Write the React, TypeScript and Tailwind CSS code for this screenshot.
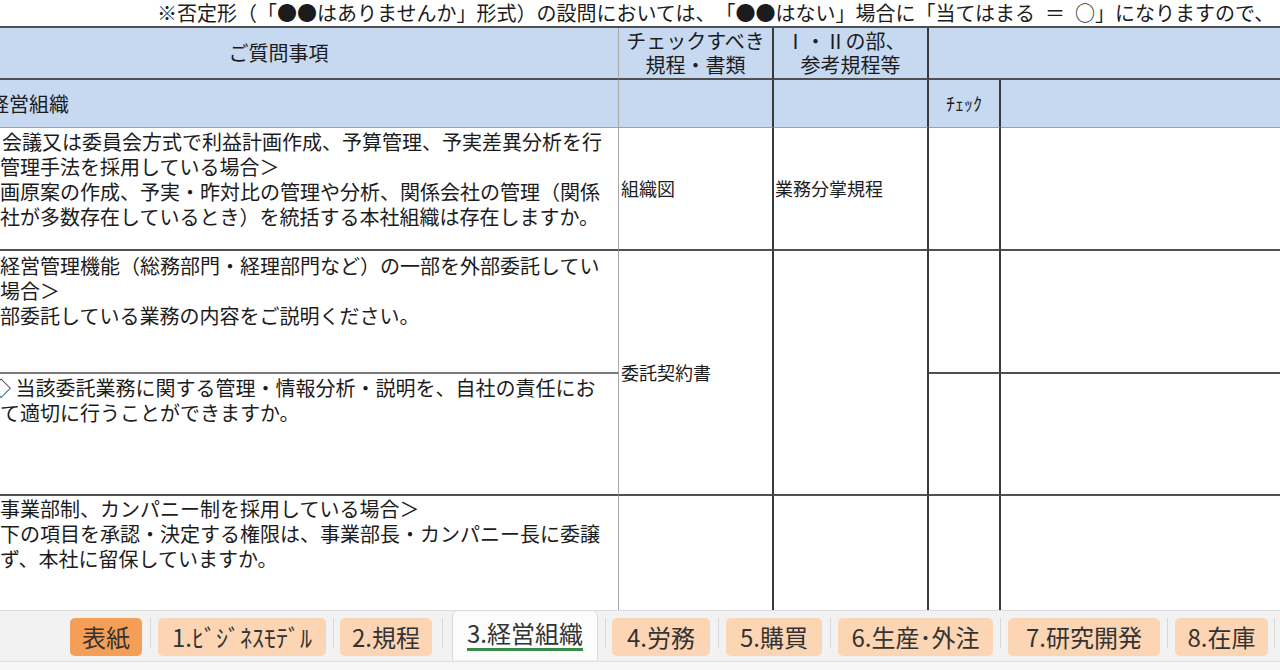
const FONT = "font-['Noto_Sans_CJK_JP','Noto_Sans_CJK_SC',sans-serif]";

const TABS = [
  { label: "表紙", w: "w-[72px]", kind: "dark" },
  { label: "1.ﾋﾞｼﾞﾈｽﾓﾃﾞﾙ", w: "w-[168px]", kind: "light" },
  { label: "2.規程", w: "w-[92px]", kind: "light" },
  { label: "3.経営組織", w: "w-[146px]", kind: "active" },
  { label: "4.労務", w: "w-[98px]", kind: "light" },
  { label: "5.購買", w: "w-[96px]", kind: "light" },
  { label: "6.生産･外注", w: "w-[155px]", kind: "light" },
  { label: "7.研究開発", w: "w-[152px]", kind: "light" },
  { label: "8.在庫", w: "w-[93px]", kind: "light" },
];

const SEPS = ["w-[16px]", "w-[14px]", "w-[20px]", "w-[14px]", "w-[16px]", "w-[16px]", "w-[15px]", "w-[15px]", "w-[12px]"];

function Sep({ w }: { w: string }) {
  return (
    <div className={`${w} h-full flex items-center justify-center`}>
      <div className="w-px h-[30px] mt-[-6px] bg-[#d6d6d6]" />
    </div>
  );
}

function SheetTabs() {
  return (
    <div className="h-[60px] shrink-0 bg-[#f2f2f2] border-t border-[#dcdcdc] flex flex-col">
      <div className="flex h-[50px] pl-[70px] items-start">
        {TABS.map((t, i) => (
          <div key={t.label} className="flex h-full">
            {t.kind === "active" ? (
              <div
                className={`${t.w} h-[50px] mt-[-1px] bg-[#fcfcfc] border border-b-0 border-[#dadada] rounded-t-md flex items-center justify-center`}
              >
                <span className="text-[24px] leading-[28px] text-[#333] border-b-[3px] border-[#3a8a4c] pb-[1px] mt-[-2px]">
                  {t.label}
                </span>
              </div>
            ) : (
              <div
                className={`${t.w} h-[38px] mt-[7px] rounded-[5px] flex items-center justify-center text-[24px] leading-[28px] text-[#333] whitespace-nowrap ${
                  t.kind === "dark" ? "bg-[#f59e57]" : "bg-[#fcd5b4]"
                }`}
              >
                {t.label}
              </div>
            )}
            <Sep w={SEPS[i]} />
          </div>
        ))}
      </div>
      <div className="flex-1 border-t border-[#dedede] bg-[#f7f7f7]" />
    </div>
  );
}

function Lines({ lines, className = "" }: { lines: { t: string; ml?: string }[]; className?: string }) {
  return (
    <div className={`pl-[61px] leading-[25px] text-[20px] whitespace-nowrap ${className}`}>
      {lines.map((l, i) => (
        <div key={i} className={l.ml ?? ""}>
          {l.t}
        </div>
      ))}
    </div>
  );
}

const BLUE = "bg-[#c6d9f0]";
const VLIGHT = "border-r border-[#a8a8a8]";
const VDARK = "border-r-2 border-r-[#3a3a3a]";
const HDARK = "border-b-2 border-b-[#505050]";

export default function App() {
  return (
    <div className={`w-[1280px] h-[670px] overflow-hidden bg-white flex flex-col text-[#1c1c1c] [text-spacing-trim:space-all] ${FONT}`}>
      <div className="h-[28px] shrink-0 border-b-2 border-[#505050] pl-[157px] text-[20px] leading-[26px] whitespace-nowrap">
        ※否定形（「●●はありませんか」形式）の設問においては、「●●はない」場合に「当てはまる{"\u2002"}＝{"\u2002"}○」になりますので、
      </div>

      <div className="flex-1 overflow-hidden">
        <div className="ml-[-61px] w-[1341px] h-full grid grid-cols-[680px_155px_155px_72px_1fr] grid-rows-[52px_48px_123px_123px_122px_1fr]">
          {/* header */}
          <div className={`col-start-1 row-start-1 ${BLUE} ${VLIGHT} ${HDARK} flex items-center justify-center text-[20px]`}>
            ご質問事項
          </div>
          <div className={`col-start-2 row-start-1 ${BLUE} ${VDARK} ${HDARK} flex flex-col items-center justify-center text-[20px] leading-[24px]`}>
            <div>チェックすべき</div>
            <div>規程・書類</div>
          </div>
          <div className={`col-start-3 row-start-1 ${BLUE} ${VDARK} ${HDARK} flex flex-col items-center justify-center text-[20px] leading-[24px]`}>
            <div className="pr-[10px]">Ⅰ・Ⅱの部、</div>
            <div>参考規程等</div>
          </div>
          <div className={`col-start-4 col-span-2 row-start-1 ${BLUE} ${HDARK}`} />

          {/* section */}
          <div className={`col-start-1 row-start-2 ${BLUE} ${VLIGHT} border-b border-b-[#8ea3bd] overflow-hidden flex items-center`}>
            <Lines lines={[{ t: "経営組織", ml: "ml-[-11px]" }]} />
          </div>
          <div className={`col-start-2 row-start-2 ${BLUE} ${VDARK} border-b border-b-[#8ea3bd]`} />
          <div className={`col-start-3 row-start-2 ${BLUE} ${VDARK} border-b border-b-[#8ea3bd]`} />
          <div className={`col-start-4 row-start-2 ${BLUE} ${VDARK} border-b border-b-[#8ea3bd] flex items-center justify-center text-[18px]`}>
            ﾁｪｯｸ
          </div>
          <div className={`col-start-5 row-start-2 ${BLUE} border-b border-b-[#8ea3bd]`} />

          {/* row 1 */}
          <div className={`col-start-1 row-start-3 ${VLIGHT} ${HDARK} overflow-hidden pt-[1px]`}>
            <Lines
              lines={[
                { t: "会議又は委員会方式で利益計画作成、予算管理、予実差異分析を行", ml: "ml-[2px]" },
                { t: "管理手法を採用している場合＞" },
                { t: "画原案の作成、予実・昨対比の管理や分析、関係会社の管理（関係" },
                { t: "社が多数存在しているとき）を統括する本社組織は存在しますか。" },
              ]}
            />
          </div>
          <div className={`col-start-2 row-start-3 ${VDARK} ${HDARK} flex items-center pl-[2px] text-[18px]`}>組織図</div>
          <div className={`col-start-3 row-start-3 ${VDARK} ${HDARK} flex items-center pl-[1px] text-[18px]`}>業務分掌規程</div>
          <div className={`col-start-4 row-start-3 ${VDARK} ${HDARK}`} />
          <div className={`col-start-5 row-start-3 ${HDARK}`} />

          {/* row 2 */}
          <div className={`col-start-1 row-start-4 ${VLIGHT} border-b-2 border-b-[#7a7a7a] overflow-hidden pt-[2px]`}>
            <Lines
              lines={[
                { t: "経営管理機能（総務部門・経理部門など）の一部を外部委託してい" },
                { t: "場合＞" },
                { t: "部委託している業務の内容をご説明ください。" },
              ]}
            />
          </div>
          <div className={`col-start-2 row-start-4 row-span-2 ${VDARK} ${HDARK} flex items-center pl-[2px] text-[18px]`}>委託契約書</div>
          <div className={`col-start-3 row-start-4 row-span-2 ${VDARK} ${HDARK}`} />
          <div className={`col-start-4 row-start-4 ${VDARK} ${HDARK}`} />
          <div className={`col-start-5 row-start-4 ${HDARK}`} />

          <div className={`col-start-1 row-start-5 ${VLIGHT} ${HDARK} overflow-hidden pt-[1px]`}>
            <Lines
              lines={[
                { t: "◇ 当該委託業務に関する管理・情報分析・説明を、自社の責任にお", ml: "ml-[-9px]" },
                { t: "て適切に行うことができますか。" },
              ]}
            />
          </div>
          <div className={`col-start-4 row-start-5 ${VDARK} ${HDARK}`} />
          <div className={`col-start-5 row-start-5 ${HDARK}`} />

          {/* row 3 */}
          <div className={`col-start-1 row-start-6 ${VLIGHT} overflow-hidden`}>
            <Lines
              lines={[
                { t: "事業部制、カンパニー制を採用している場合＞" },
                { t: "下の項目を承認・決定する権限は、事業部長・カンパニー長に委譲" },
                { t: "ず、本社に留保していますか。" },
              ]}
            />
          </div>
          <div className={`col-start-2 row-start-6 ${VDARK}`} />
          <div className={`col-start-3 row-start-6 ${VDARK}`} />
          <div className={`col-start-4 row-start-6 ${VDARK}`} />
          <div className="col-start-5 row-start-6" />
        </div>
      </div>

      <SheetTabs />
    </div>
  );
}
